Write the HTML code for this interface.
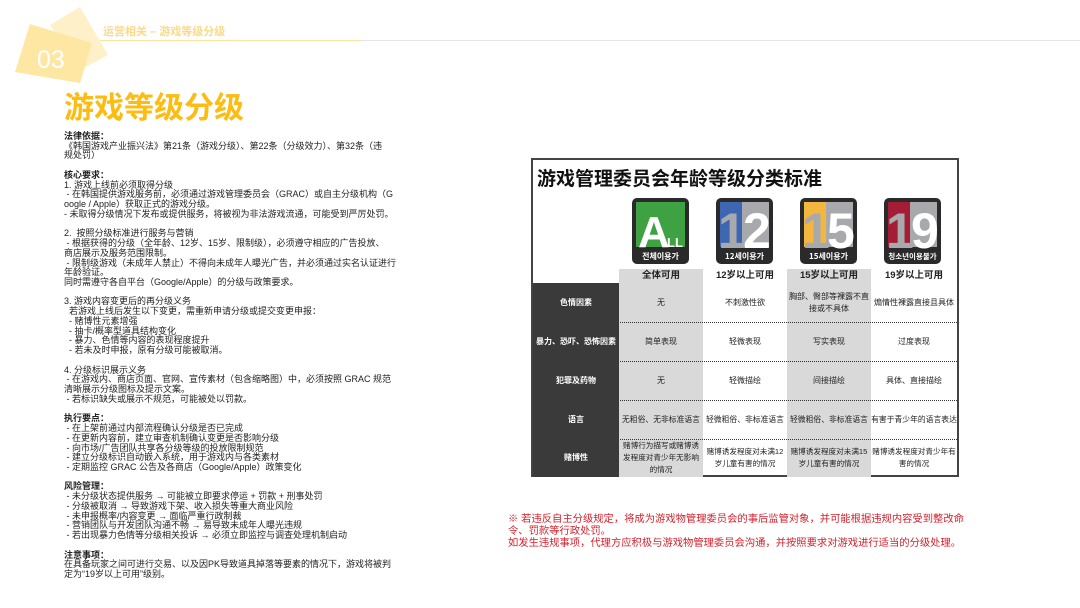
<!DOCTYPE html>
<html><head><meta charset="utf-8"><style>
*{margin:0;padding:0;box-sizing:border-box}
body{width:1080px;height:608px;background:#fff;position:relative;overflow:hidden;font-family:"Liberation Sans","Noto Sans CJK SC",sans-serif}
.abs{position:absolute}
#left{left:64px;top:132px;font-size:9px;line-height:9.73px;color:#222;white-space:nowrap}
#left b{font-weight:bold}
.t{position:absolute;left:531px;top:158px;width:428px;height:319px;border:2px solid #444;background:#fff}
.cell{position:absolute;display:flex;align-items:center;justify-content:center;text-align:center;font-size:8px;line-height:12px;color:#222;white-space:nowrap}
.g{background:#d9d9d9}
.hd{background:#3a3a3a;color:#fff;font-weight:bold}
.sep{position:absolute;left:0;width:424px;border-top:1px dotted #333;height:0}
</style></head><body>
<svg class="abs" style="left:0;top:0" width="120" height="100">
<polygon points="50,25 80,7 108,55 80,70" fill="#fef0c8"/>
<polygon points="30,24 92,43 80,83 15,72" fill="#fee7a3"/>
<text x="37" y="68" font-family="Liberation Sans" font-size="25" fill="#fff">03</text>
</svg>
<div class="abs" style="left:103px;top:23px;font-size:11px;font-weight:bold;color:#fbd98a">运营相关 – 游戏等级分级</div>
<div class="abs" style="left:100px;top:40px;width:262px;height:1px;background:#fde3a0"></div>
<div class="abs" style="left:362px;top:40px;width:718px;height:1px;background:#e6e6e6"></div>
<div class="abs" style="left:64px;top:83px;font-size:30px;font-weight:bold;color:#fcbc12">游戏等级分级</div>

<div id="left" class="abs">
<b>法律依据：</b><br>《韩国游戏产业振兴法》第21条（游戏分级）、第22条（分级效力）、第32条（违<br>规处罚）<br><br>
<b>核心要求：</b><br>1. 游戏上线前必须取得分级<br>&nbsp;- 在韩国提供游戏服务前，必须通过游戏管理委员会（GRAC）或自主分级机构（G<br>oogle / Apple）获取正式的游戏分级。<br>- 未取得分级情况下发布或提供服务，将被视为非法游戏流通，可能受到严厉处罚。<br><br>
2.&nbsp; 按照分级标准进行服务与营销<br>&nbsp;- 根据获得的分级（全年龄、12岁、15岁、限制级），必须遵守相应的广告投放、<br>商店展示及服务范围限制。<br>&nbsp;- 限制级游戏（未成年人禁止）不得向未成年人曝光广告，并必须通过实名认证进行<br>年龄验证。<br>同时需遵守各自平台（Google/Apple）的分级与政策要求。<br><br>
3. 游戏内容变更后的再分级义务<br>&nbsp; 若游戏上线后发生以下变更，需重新申请分级或提交变更申报：<br>&nbsp; - 赌博性元素增强<br>&nbsp; - 抽卡/概率型道具结构变化<br>&nbsp; - 暴力、色情等内容的表现程度提升<br>&nbsp; - 若未及时申报，原有分级可能被取消。<br><br>
4. 分级标识展示义务<br>&nbsp;- 在游戏内、商店页面、官网、宣传素材（包含缩略图）中，必须按照 GRAC 规范<br>清晰展示分级图标及提示文案。<br>&nbsp;- 若标识缺失或展示不规范，可能被处以罚款。<br><br>
<b>执行要点：</b><br>&nbsp;- 在上架前通过内部流程确认分级是否已完成<br>&nbsp;- 在更新内容前，建立审查机制确认变更是否影响分级<br>&nbsp;- 向市场/广告团队共享各分级等级的投放限制规范<br>&nbsp;- 建立分级标识自动嵌入系统，用于游戏内与各类素材<br>&nbsp;- 定期监控 GRAC 公告及各商店（Google/Apple）政策变化<br><br>
<b>风险管理：</b><br>&nbsp;- 未分级状态提供服务 → 可能被立即要求停运 + 罚款 + 刑事处罚<br>&nbsp;- 分级被取消 → 导致游戏下架、收入损失等重大商业风险<br>&nbsp;- 未申报概率/内容变更 → 面临严重行政制裁<br>&nbsp;- 营销团队与开发团队沟通不畅 → 易导致未成年人曝光违规<br>&nbsp;- 若出现暴力色情等分级相关投诉 → 必须立即监控与调查处理机制启动<br><br>
<b>注意事项：</b><br>在具备玩家之间可进行交易、以及因PK导致道具掉落等要素的情况下，游戏将被判<br>定为“19岁以上可用”级别。
</div>

<div class="t">
<div class="abs" style="left:4px;top:4px;font-size:19px;font-weight:bold;color:#111">游戏管理委员会年龄等级分类标准</div>
<svg class="abs" style="left:99px;top:38px" width="330" height="70">
<g font-family="Liberation Sans" font-weight="bold">
<g transform="translate(0,0)"><rect x="0" y="0" width="57" height="66" rx="5" fill="#2a2a2a"/><rect x="4" y="4" width="49" height="45" fill="#3fa242"/><text x="6" y="49" font-size="44" fill="#fff">A</text><text x="35" y="49" font-size="13" fill="#fff">LL</text><text x="28.5" y="61" font-size="8" fill="#fff" text-anchor="middle" font-family="Noto Sans CJK KR">전체이용가</text></g>
<g transform="translate(84,0)"><rect x="0" y="0" width="57" height="66" rx="5" fill="#2a2a2a"/><rect x="4" y="4" width="49" height="45" fill="#3d67b3"/><rect x="26" y="4" width="27" height="45" fill="#a7a9ac"/><text x="2" y="50" font-size="50" fill="#a7a9ac">1</text><text x="27" y="50" font-size="50" fill="#fff">2</text><text x="28.5" y="61" font-size="8" fill="#fff" text-anchor="middle" font-family="Noto Sans CJK KR">12세이용가</text></g>
<g transform="translate(168,0)"><rect x="0" y="0" width="57" height="66" rx="5" fill="#2a2a2a"/><rect x="4" y="4" width="49" height="45" fill="#f3b63f"/><rect x="26" y="4" width="27" height="45" fill="#a7a9ac"/><text x="2" y="50" font-size="50" fill="#a7a9ac">1</text><text x="27" y="50" font-size="50" fill="#fff">5</text><text x="28.5" y="61" font-size="8" fill="#fff" text-anchor="middle" font-family="Noto Sans CJK KR">15세이용가</text></g>
<g transform="translate(252,0)"><rect x="0" y="0" width="57" height="66" rx="5" fill="#2a2a2a"/><rect x="4" y="4" width="49" height="45" fill="#a51c36"/><rect x="26" y="4" width="27" height="45" fill="#a7a9ac"/><text x="2" y="50" font-size="50" fill="#a7a9ac">1</text><text x="27" y="50" font-size="50" fill="#fff">9</text><text x="28.5" y="61" font-size="7.5" fill="#fff" text-anchor="middle" font-family="Noto Sans CJK KR">청소년이용불가</text></g>
</g></svg>
<div class="cell g" style="left:86px;top:109px;width:84px;height:14px;font-weight:bold;font-size:9.5px">全体可用</div>
<div class="cell" style="left:170px;top:109px;width:84px;height:14px;font-weight:bold;font-size:9.5px">12岁以上可用</div>
<div class="cell g" style="left:254px;top:109px;width:84px;height:14px;font-weight:bold;font-size:9.5px">15岁以上可用</div>
<div class="cell" style="left:338px;top:109px;width:86px;height:14px;font-weight:bold;font-size:9.5px">19岁以上可用</div>
<div class="abs" style="left:0;top:123px;width:86px;height:194px;background:#3a3a3a"></div>
<div class="abs g" style="left:86px;top:123px;width:84px;height:194px"></div>
<div class="abs g" style="left:254px;top:123px;width:84px;height:194px"></div>
<div class="cell hd" style="left:0;top:123px;width:86px;height:39px">色情因素</div>
<div class="cell" style="left:86px;top:123px;width:84px;height:39px">无</div>
<div class="cell" style="left:170px;top:123px;width:84px;height:39px">不刺激性欲</div>
<div class="cell" style="left:254px;top:123px;width:84px;height:39px">胸部、臀部等裸露不直<br>接或不具体</div>
<div class="cell" style="left:338px;top:123px;width:86px;height:39px">煽情性裸露直接且具体</div>
<div class="sep" style="top:162px"></div>
<div class="cell hd" style="left:0;top:162px;width:86px;height:39px">暴力、恐吓、恐怖因素</div>
<div class="cell" style="left:86px;top:162px;width:84px;height:39px">简单表现</div>
<div class="cell" style="left:170px;top:162px;width:84px;height:39px">轻微表现</div>
<div class="cell" style="left:254px;top:162px;width:84px;height:39px">写实表现</div>
<div class="cell" style="left:338px;top:162px;width:86px;height:39px">过度表现</div>
<div class="sep" style="top:201px"></div>
<div class="cell hd" style="left:0;top:201px;width:86px;height:39px">犯罪及药物</div>
<div class="cell" style="left:86px;top:201px;width:84px;height:39px">无</div>
<div class="cell" style="left:170px;top:201px;width:84px;height:39px">轻微描绘</div>
<div class="cell" style="left:254px;top:201px;width:84px;height:39px">间接描绘</div>
<div class="cell" style="left:338px;top:201px;width:86px;height:39px">具体、直接描绘</div>
<div class="sep" style="top:240px"></div>
<div class="cell hd" style="left:0;top:240px;width:86px;height:39px">语言</div>
<div class="cell" style="left:86px;top:240px;width:84px;height:39px;font-size:7.8px">无粗俗、无非标准语言</div>
<div class="cell" style="left:170px;top:240px;width:84px;height:39px;font-size:7.8px">轻微粗俗、非标准语言</div>
<div class="cell" style="left:254px;top:240px;width:84px;height:39px;font-size:7.8px">轻微粗俗、非标准语言</div>
<div class="cell" style="left:338px;top:240px;width:86px;height:39px;font-size:7.8px">有害于青少年的语言表达</div>
<div class="sep" style="top:279px"></div>
<div class="cell hd" style="left:0;top:279px;width:86px;height:38px">赌博性</div>
<div class="cell" style="left:86px;top:279px;width:84px;height:38px;font-size:7.6px">赌博行为描写或赌博诱<br>发程度对青少年无影响<br>的情况</div>
<div class="cell" style="left:170px;top:279px;width:84px;height:38px;font-size:7.6px">赌博诱发程度对未满12<br>岁儿童有害的情况</div>
<div class="cell" style="left:254px;top:279px;width:84px;height:38px;font-size:7.6px">赌博诱发程度对未满15<br>岁儿童有害的情况</div>
<div class="cell" style="left:338px;top:279px;width:86px;height:38px;font-size:7.6px">赌博诱发程度对青少年有<br>害的情况</div>
</div>

<div class="abs" style="left:508px;top:514px;font-size:10.3px;line-height:12px;color:#d4202c;white-space:nowrap">※ 若违反自主分级规定，将成为游戏物管理委员会的事后监管对象，并可能根据违规内容受到整改命<br>令、罚款等行政处罚。<br>如发生违规事项，代理方应积极与游戏物管理委员会沟通，并按照要求对游戏进行适当的分级处理。</div>
</body></html>
